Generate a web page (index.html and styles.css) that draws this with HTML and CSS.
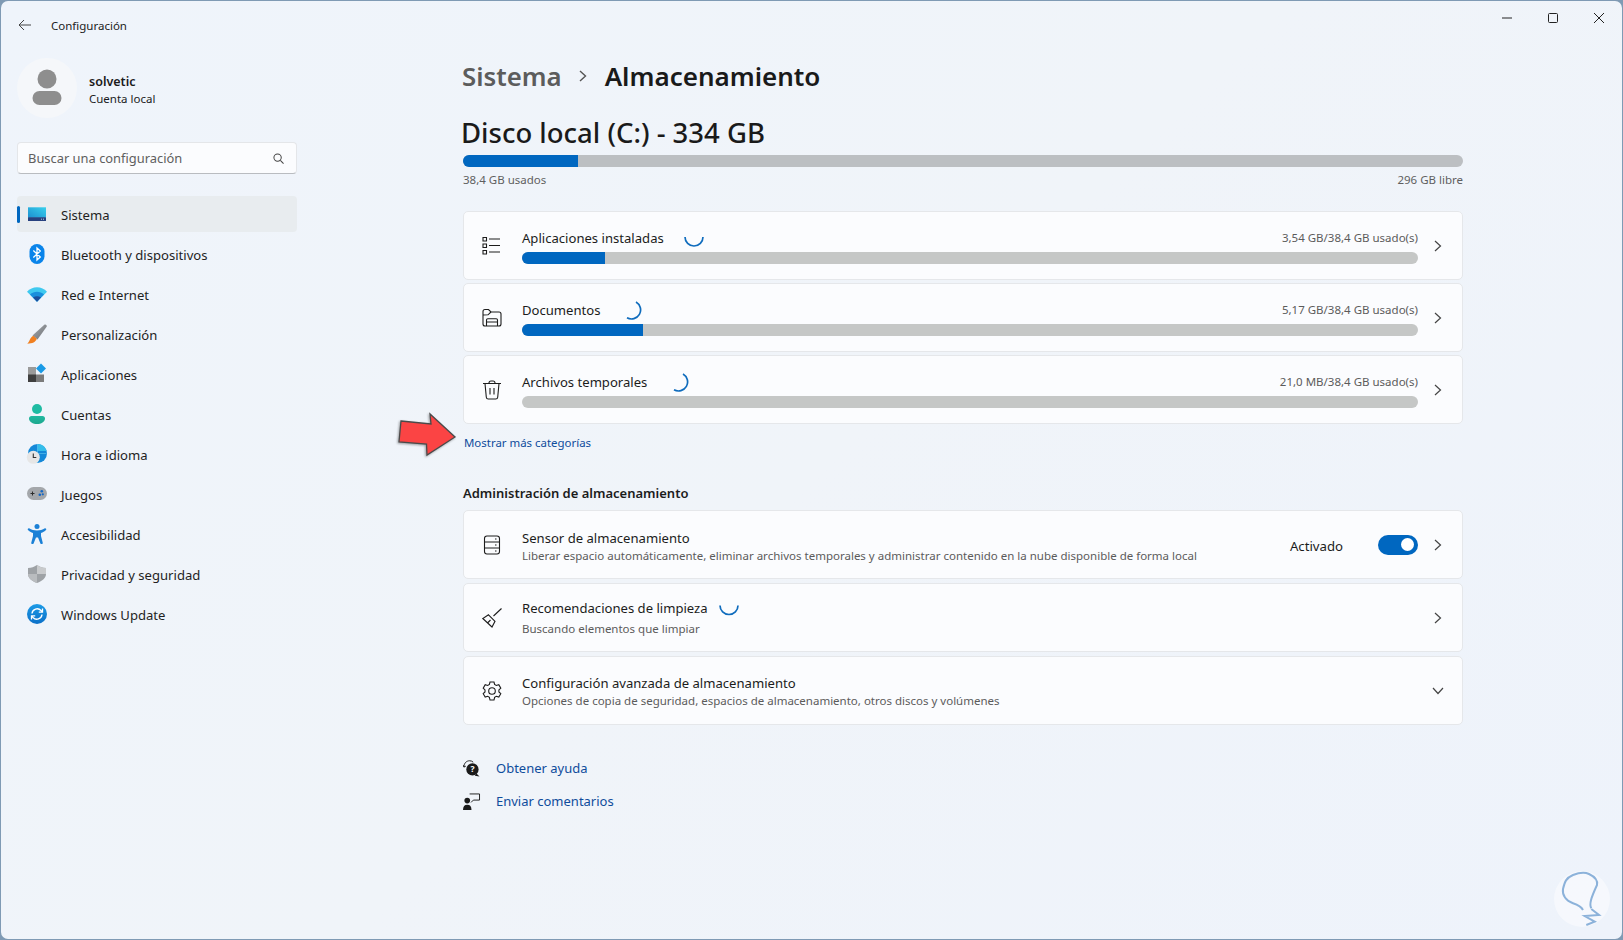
FILE: index.html
```html
<!DOCTYPE html>
<html lang="es">
<head>
<meta charset="utf-8">
<title>Configuración</title>
<link rel="stylesheet" href="styles.css">
</head>
<body>
<div class="window">
  <header class="titlebar">
    <svg class="back" viewBox="0 0 14 12"><path d="M13 6H1M6 1 1 6l5 5"/></svg>
    <span class="app-title">Configuración</span>
    <div class="controls">
      <span class="ctl"><svg viewBox="0 0 10 10"><path d="M0 5h10"/></svg></span>
      <span class="ctl"><svg viewBox="0 0 10 10"><rect x=".5" y=".5" width="9" height="9" rx="1"/></svg></span>
      <span class="ctl"><svg viewBox="0 0 10 10"><path d="M0 0l10 10M10 0 0 10"/></svg></span>
    </div>
  </header>
  <div class="body">
    <aside class="sidebar">
      <div class="profile">
        <div class="avatar"><svg viewBox="0 0 60 60"><circle cx="30" cy="21" r="9.5"/><rect x="15.500" y="33" width="29" height="14" rx="7"/></svg></div>
        <div class="who"><div class="who-name">solvetic</div><div class="who-kind">Cuenta local</div></div>
      </div>
      <div class="search"><span>Buscar una configuración</span><svg viewBox="0 0 12 12"><circle cx="5" cy="5" r="4"/><path d="m8 8 3.500 3.500"/></svg></div>
      <nav class="nav">
        <a class="nav-item active"><svg class="nav-ic" viewBox="0 0 20 20"><defs><linearGradient id="g1" x1="0" y1="1" x2="1" y2="0"><stop offset="0" stop-color="#1c8fd0"/><stop offset="1" stop-color="#38d0ec"/></linearGradient></defs><rect x="1" y="3.300" width="18" height="10.500" fill="url(#g1)"/><rect x="1" y="13.300" width="18" height="3.700" rx=".5" fill="#27417f"/><path d="M14 15.200h1M16 15.200h1" stroke="#bcd" stroke-width="1"/></svg>Sistema</a>
        <a class="nav-item"><svg class="nav-ic" viewBox="0 0 20 20"><rect x="2.500" y="0" width="15" height="20" rx="7.500" fill="#0a84ea"/><path d="M6.300 6.500 13.300 13 10 16V4l3.300 3-7 6.500" fill="none" stroke="#fff" stroke-width="1.300"/></svg>Bluetooth y dispositivos</a>
        <a class="nav-item"><svg class="nav-ic" viewBox="0 0 20 20"><path d="M0 7.800C5 1.600 15 1.600 20 7.800L10 17.800Z" fill="#3fc9ef"/><path d="M3 10.500C7 6.800 13 6.800 17 10.500L10 17.800Z" fill="#1a8fdc"/><path d="M6 13.500C8.500 11.800 11.500 11.800 14 13.500L10 17.800Z" fill="#1b4f9c"/></svg>Red e Internet</a>
        <a class="nav-item"><svg class="nav-ic" viewBox="0 0 20 20"><defs><linearGradient id="g4" x1="0" y1="0" x2="1" y2="1"><stop offset="0" stop-color="#a5a8ac"/><stop offset="1" stop-color="#6f7378"/></linearGradient></defs><path d="M17.300 .8C18.500 -.2 20.400 1.300 19.600 2.800L10.500 15.500 5.500 11.500Z" fill="url(#g4)"/><path d="M6.300 11.800 9.800 14.800C8.800 18 5.500 19.600 .2 19.800 2.600 18 2.800 13.500 6.300 11.800Z" fill="#f08021"/></svg>Personalización</a>
        <a class="nav-item"><svg class="nav-ic" viewBox="0 0 20 20"><rect x="1" y="3" width="8" height="8" fill="#9a9a9a"/><rect x="1" y="10.500" width="8" height="7.500" fill="#3f3f3f"/><rect x="9" y="10.500" width="8" height="7.500" fill="#7b7b7b"/><path d="M14 -.5 19 4.500 14 9.500 9 4.500Z" fill="#1a9ae6"/></svg>Aplicaciones</a>
        <a class="nav-item"><svg class="nav-ic" viewBox="0 0 20 20"><defs><linearGradient id="g2" x1="0" y1="0" x2="0" y2="1"><stop offset="0" stop-color="#22b8a0"/><stop offset="1" stop-color="#1ca88e"/></linearGradient></defs><circle cx="10" cy="5" r="5" fill="#1fbba3"/><path d="M2 14.500C2 13 3 12 4.500 12h11c1.500 0 2.500 1 2.500 2.500 0 3.500-4 5.500-8 5.500s-8-2-8-5.500Z" fill="url(#g2)"/></svg>Cuentas</a>
        <a class="nav-item"><svg class="nav-ic" viewBox="0 0 20 20"><circle cx="10.500" cy="9.500" r="9.500" fill="#1488d8"/><path d="M10.500 0a9.500 9.500 0 0 1 9 7h-9Z" fill="#35bdea"/><path d="M10.500 0v19M1 9.500h18.500" stroke="#64c6ee" stroke-width=".6"/><circle cx="6.300" cy="13.300" r="6.500" fill="#e6e6e6"/><path d="M6.300 9.500v4h3" fill="none" stroke="#333" stroke-width="1.100"/></svg>Hora e idioma</a>
        <a class="nav-item"><svg class="nav-ic" viewBox="0 0 20 20"><rect x="0" y="3" width="20" height="13" rx="6.500" fill="#a4a7ab"/><path d="M3.500 9.500h4M5.500 7.500v4" stroke="#2c2c2c" stroke-width="1"/><circle cx="14.800" cy="7.300" r="1.300" fill="#1366c4"/><circle cx="12.800" cy="10.800" r="1.300" fill="#1366c4"/><circle cx="15.800" cy="10.300" r="1.100" fill="#1366c4"/></svg>Juegos</a>
        <a class="nav-item"><svg class="nav-ic" viewBox="0 0 20 20"><circle cx="10" cy="2.500" r="2.500" fill="#1b80d6"/><path d="M.8 5.800C.3 5.200 1.400 3.800 2.100 4.300 4.500 6 7 6.500 10 6.500s5.500-.5 7.900-2.200c.7-.5 1.800.9 1.300 1.500-1.600 1.700-3.300 2.700-5.200 3.300V12l1.800 7c.2 1.200-2 1.600-2.400.4L11 13.500h-2l-2.400 5.900c-.4 1.200-2.600.8-2.400-.4L6 12V9.100C4.100 8.500 2.400 7.500.8 5.800Z" fill="#1b80d6"/></svg>Accesibilidad</a>
        <a class="nav-item"><svg class="nav-ic" viewBox="0 0 20 20"><path d="M10 1c3 2 5.500 2.700 9 3v6c0 4-3.500 7-9 9-5.500-2-9-5-9-9V4c3.500-.3 6-1 9-3Z" fill="#9ea2a6"/><path d="M10 1c3 2 5.500 2.700 9 3v6H10Z" fill="#c8cacc"/><path d="M1 10h9v9c-5.500-2-9-5-9-9Z" fill="#b9bcbf"/></svg>Privacidad y seguridad</a>
        <a class="nav-item"><svg class="nav-ic" viewBox="0 0 20 20"><defs><linearGradient id="g3" x1="0" y1="0" x2="0" y2="1"><stop offset="0" stop-color="#1d9be6"/><stop offset="1" stop-color="#0c70c8"/></linearGradient></defs><circle cx="10" cy="10" r="10" fill="url(#g3)"/><path d="M5 9.500a5.200 5.200 0 0 1 9-3l1 1.200M15 10.500a5.200 5.200 0 0 1-9 3l-1-1.200" fill="none" stroke="#fff" stroke-width="1.400"/><path d="M15.500 4.500v3.700h-3.700M4.500 15.500v-3.700h3.700" fill="none" stroke="#fff" stroke-width="1.300"/></svg>Windows Update</a>
      </nav>
    </aside>
    <main class="main">
      <div class="crumbs">
        <span class="crumb-parent">Sistema</span>
        <svg class="crumb-sep" viewBox="0 0 8 12"><path d="m1 1 5.500 5L1 11"/></svg>
        <span class="crumb-now">Almacenamiento</span>
      </div>
      <h1 class="disk-title">Disco local (C:) - 334 GB</h1>
      <div class="meter meter-disk"><div class="meter-fill" style="width:11.5%"></div></div>
      <div class="disk-labels"><span>38,4 GB usados</span><span>296 GB libre</span></div>

      <div class="cards cards-usage">
        <section class="card">
          <svg class="card-ic" viewBox="0 0 20 20"><path d="M1 1.500h3.500V5H1ZM1 8h3.500v3.500H1ZM1 14.500h3.500V18H1ZM7 3h11M7 9.500h11M7 16h11"/></svg>
          <div class="usage">
            <div class="usage-top"><span class="card-title">Aplicaciones instaladas</span><svg class="spin" viewBox="0 0 20 20"><path d="M1 9A9 9 0 0 0 19 9"/></svg><span class="usage-num">3,54 GB/38,4 GB usado(s)</span></div>
            <div class="meter"><div class="meter-fill" style="width:9.26%"></div></div>
          </div>
          <svg class="chev" viewBox="0 0 8 12"><path d="m1 1 5.500 5L1 11"/></svg>
        </section>
        <section class="card">
          <svg class="card-ic" viewBox="0 0 20 20"><path d="M1 16V3.500C1 2.500 1.800 1.500 3 1.500h3.500L9 4h8c1.200 0 2 .8 2 2v10c0 1.200-.8 2-2 2H3c-1.200 0-2-.8-2-2ZM1 7l5-.2L9 4M4.500 17.800V12c0-.8.500-1.300 1.300-1.300h8.400c.8 0 1.300.5 1.300 1.300v5.800M4.500 14h11"/></svg>
          <div class="usage">
            <div class="usage-top"><span class="card-title">Documentos</span><svg class="spin spin-wide" viewBox="0 0 20 20"><path d="M5 17.800A9 9 0 0 0 14 2"/></svg><span class="usage-num">5,17 GB/38,4 GB usado(s)</span></div>
            <div class="meter"><div class="meter-fill" style="width:13.5%"></div></div>
          </div>
          <svg class="chev" viewBox="0 0 8 12"><path d="m1 1 5.500 5L1 11"/></svg>
        </section>
        <section class="card">
          <svg class="card-ic" viewBox="0 0 20 20"><path d="M1 3.500h18M7 3.500V3c0-1.200 1-2 2-2h2c1 0 2 .8 2 2v.5M3 3.500l1.300 13.800c.1 1 1 1.700 2 1.700h7.400c1 0 1.900-.7 2-1.700L17 3.500M8 8v6.500M12 8v6.500"/></svg>
          <div class="usage">
            <div class="usage-top"><span class="card-title">Archivos temporales</span><svg class="spin spin-wide" viewBox="0 0 20 20"><path d="M5 17.800A9 9 0 0 0 14 2"/></svg><span class="usage-num">21,0 MB/38,4 GB usado(s)</span></div>
            <div class="meter"><div class="meter-fill meter-empty"></div></div>
          </div>
          <svg class="chev" viewBox="0 0 8 12"><path d="m1 1 5.500 5L1 11"/></svg>
        </section>
      </div>
      <a class="more-link">Mostrar más categorías</a>

      <h2 class="sec-title">Administración de almacenamiento</h2>
      <div class="cards">
        <section class="card card-tall">
          <svg class="card-ic" viewBox="0 0 20 20"><rect x="2.500" y="1" width="15" height="18" rx="2.500"/><path d="M2.500 7h15M2.500 13h15M13 4h1.500M13 10h1.500M13 16h1.500"/></svg>
          <div class="text text-low"><div class="card-title">Sensor de almacenamiento</div><div class="card-sub">Liberar espacio automáticamente, eliminar archivos temporales y administrar contenido en la nube disponible de forma local</div></div>
          <span class="state">Activado</span>
          <span class="toggle"><span class="knob"></span></span>
          <svg class="chev" viewBox="0 0 8 12"><path d="m1 1 5.500 5L1 11"/></svg>
        </section>
        <section class="card card-tall">
          <svg class="card-ic" viewBox="0 0 20 20"><path d="M19.500 .5 11.500 8M6.500 6.800 13 13.300 10 19 .8 10.500ZM5.500 15l3-3"/></svg>
          <div class="text-loose"><div class="card-head"><span class="card-title">Recomendaciones de limpieza</span><svg class="spin" viewBox="0 0 20 20"><path d="M1 7.500A9 9 0 0 0 19 7.500"/></svg></div><div class="card-sub">Buscando elementos que limpiar</div></div>
          <svg class="chev chev-end" viewBox="0 0 8 12"><path d="m1 1 5.500 5L1 11"/></svg>
        </section>
        <section class="card card-tall">
          <svg class="card-ic" viewBox="0 0 20 20"><path d="M8 1h4l.6 2.500 1.700 1 2.500-.8 2 3.400-1.900 1.800v2l1.900 1.800-2 3.400-2.500-.8-1.700 1L12 19H8l-.6-2.700-1.700-1-2.500.8-2-3.400L3 10.900v-2L1.200 7.100l2-3.400 2.500.8 1.700-1Z"/><circle cx="10" cy="10" r="3.300"/></svg>
          <div class="text"><div class="card-title">Configuración avanzada de almacenamiento</div><div class="card-sub">Opciones de copia de seguridad, espacios de almacenamiento, otros discos y volúmenes</div></div>
          <svg class="chev-down" viewBox="0 0 12 8"><path d="m1 1 5 5.500L11 1"/></svg>
        </section>
      </div>

      <div class="links">
        <a class="link-row"><svg class="link-ic" viewBox="0 0 18 18"><path class="ln" d="M1 7.500C1 3 4 .8 7 .8c1.500 0 2.800.5 3.800 1.500M1 7.500l-.5-2M1 7.500l2-1"/><circle cx="10" cy="10" r="6.500"/><path d="m14 14 3.500 3.500-5-.8Z"/><text x="10" y="13" class="qm">?</text></svg>Obtener ayuda</a>
        <a class="link-row"><svg class="link-ic" viewBox="0 0 18 18"><circle cx="4.500" cy="8" r="3"/><path d="M0 18c0-3.500 1.500-5.500 4.500-5.500S9 14.500 9 18Z"/><path class="ln" d="M7 1h10.500v6.500H11L8.500 10"/></svg>Enviar comentarios</a>
      </div>
    </main>
  </div>
  <svg class="red-arrow" viewBox="0 0 62 46"><path d="M4 9 34 12 33 2 58 25 30 43 29.500 32 2 30Z"/></svg>
  <div class="stamp"><svg viewBox="0 0 60 60"><path d="M39.300 39.300C37 35 39 29 45 16 46 11 42.700 7.700 37 5 33 3 27.700 3.300 21 6 14 9 12.700 12.700 11 20c-1 6 3 12 10 14.300 4 1.400 8 3 10 6.700M39.300 40 47 46 32.700 47 42.700 52.700 34.300 56"/></svg></div>
</div>
</body>
</html>
```
FILE: styles.css
```css
* { box-sizing: border-box; }
html, body { margin: 0; height: 100%; overflow: hidden; background: #7f9ab4; }
body { font-family: "Noto Sans", "Open Sans", sans-serif; font-size: 13px; color: #1b1b1b; }

.window {
  position: relative;
  width: 1621px; height: 938px;
  margin: 1px 0 0 1px;
  background: linear-gradient(135deg, #eff4fb 0%, #f0f4f9 50%, #eef3fb 100%);
  border-radius: 7px;
  overflow: hidden;
}

.titlebar { display: flex; align-items: center; height: 48px; padding-left: 17px; }
.back { width: 14px; height: 12px; fill: none; stroke: #444; stroke-width: 1; }
.app-title { margin-left: 19px; font-size: 11.500px; color: #222; }
.controls { display: flex; margin-left: auto; }
.ctl { display: flex; justify-content: center; align-items: center; width: 46px; height: 32px; margin-top: -15px; }
.ctl svg { width: 10px; height: 10px; fill: none; stroke: #222; stroke-width: 1; }

.body { display: flex; }
.sidebar { flex: 0 0 462px; padding: 9px 0 0 16px; }

.profile { display: flex; align-items: center; gap: 12px; height: 60px; }
.avatar { width: 60px; height: 60px; border-radius: 50%; background: #f5f7fa; }
.avatar svg { width: 60px; height: 60px; fill: #8e8e8e; display: block; }
.who { padding-top: 2px; }
.who-name { font-size: 12.500px; font-weight: 600; line-height: 17px; margin-top: 1px; }
.who-kind { font-size: 11.500px; line-height: 17px; }

.search {
  display: flex; align-items: center; justify-content: space-between;
  width: 280px; height: 32px; margin-top: 24px; padding: 0 12px 0 10px;
  background: #fbfcfe; border: 1px solid #e4e6e9; border-bottom-color: #b9bcc0; border-radius: 4px;
  font-size: 12.900px; color: #5f5f5f;
}
.search svg { width: 11px; height: 11px; fill: none; stroke: #444; stroke-width: 1.100; }

.nav { display: flex; flex-direction: column; gap: 4px; width: 280px; margin-top: 22px; }
.nav-item { position: relative; display: flex; align-items: center; gap: 14px; height: 36px; padding: 2px 0 0 10px; border-radius: 4px; font-size: 13.100px; color: #1f1f1f; }
.nav-item.active { background: #e8ecef; }
.nav-item.active::before { content: ""; position: absolute; left: 0; top: 10px; width: 3px; height: 17px; border-radius: 2px; background: #0067c0; }
.nav-ic { width: 20px; height: 20px; flex: none; margin-top: -2px; overflow: visible; }

.main { flex: 0 0 1000px; padding-top: 7px; }
.crumbs { display: flex; align-items: center; height: 40px; margin-left: -1px; font-size: 25.800px; font-weight: 600; }
.crumb-parent { color: #5c5c5c; }
.crumb-sep { width: 8px; height: 12px; margin: 0 18px 0 17px; fill: none; stroke: #555; stroke-width: 1.400; }
.crumb-now { color: #1a1a1a; font-size: 26px; }

.disk-title { height: 36px; margin: 19px 0 0 -2px; font-size: 27.500px; font-weight: 500; line-height: 36px; color: #1a1a1a; }
.meter { height: 12px; border-radius: 6px; background: #c5c7c6; overflow: hidden; }
.meter-disk { margin-top: 4px; background: #bcbfc2; }
.meter-fill { height: 100%; background: #0067c0; }
.meter-empty { width: 0; }
.disk-labels { display: flex; justify-content: space-between; height: 16px; margin-top: 5px; font-size: 11.500px; line-height: 16px; color: #5f5f5f; }

.cards { display: flex; flex-direction: column; gap: 4px; }
.cards-usage { gap: 3.500px; margin-top: 23px; }
.card { display: flex; align-items: center; height: 68.500px; padding: 0 20px 0 18px; background: #fbfcfe; border: 1px solid #e5e7ea; border-radius: 5px; }
.cards-usage .card { padding-top: 2px; }
.card-tall { height: 69px; }
.card-ic { flex: none; width: 20px; height: 20px; margin-right: 20px; fill: none; stroke: #1c1c1c; stroke-width: 1.100; overflow: visible; }
.usage { flex: 1; min-width: 0; }
.usage-top { display: flex; align-items: center; height: 20px; margin-bottom: 4px; }
.card-title { font-size: 13.100px; line-height: 18px; color: #1c1c1c; }
.usage-num { margin-left: auto; font-size: 11.500px; color: #5b5b5b; position: relative; top: -1px; }
.spin { flex: none; width: 20px; height: 20px; margin-left: 20px; fill: none; stroke: #0f6cbd; stroke-width: 1.700; }
.spin-wide { margin-left: 21.500px; }
.chev { flex: none; width: 8px; height: 12px; margin-left: 16px; fill: none; stroke: #444; stroke-width: 1.200; }
.chev-end { margin-left: auto; }
.chev-down { flex: none; width: 12px; height: 8px; margin: 0 -2px 0 14px; fill: none; stroke: #444; stroke-width: 1.200; }

.more-link { display: block; height: 16px; margin: 11.500px 0 0 1px; font-size: 11.450px; line-height: 16px; color: #0f4c9c; }
.sec-title { height: 20px; margin: 32px 0 7px; font-size: 13px; font-weight: 600; line-height: 20px; color: #1c1c1c; }

.text { flex: 1; min-width: 0; padding-top: 2px; }
.text-low { padding-top: 4px; }
.text .card-title { line-height: 19px; }
.card-sub { font-size: 11.500px; line-height: 16px; color: #5b5b5b; }
.card-head { display: flex; align-items: center; height: 20px; margin-bottom: 3px; }
.card-head .spin { margin-left: 11px; }
.state { padding-top: 2px; font-size: 13.200px; color: #1c1c1c; }
.toggle { display: flex; align-items: center; justify-content: flex-end; flex: none; width: 40px; height: 20px; margin-left: 35px; padding-right: 4px; border-radius: 10px; background: #0067c0; }
.knob { width: 13px; height: 13px; border-radius: 50%; background: #fff; }

.links { display: flex; flex-direction: column; gap: 13px; margin-top: 33px; }
.link-row { display: flex; align-items: center; gap: 16px; height: 20px; font-size: 13px; color: #0f4c9c; }
.link-ic { flex: none; width: 17px; height: 17px; fill: #1a1a1a; overflow: visible; }
.link-ic .ln { fill: none; stroke: #1a1a1a; stroke-width: 1; }
.link-ic .qm { fill: #fff; font-size: 9px; font-weight: 700; text-anchor: middle; }

.red-arrow { position: absolute; left: 396px; top: 411px; width: 62px; height: 46px; fill: #fb4444; stroke: #4a4a4a; stroke-width: 1.300; stroke-linejoin: miter; filter: drop-shadow(-1px 1px 1px rgba(0,0,0,.35)); }
.stamp { position: absolute; left: 1553px; top: 870px; width: 56px; height: 56px; border-radius: 50%; background: rgba(255,255,255,.45); }
.stamp svg { display: block; width: 60px; height: 60px; margin: -2px; fill: none; stroke: #8cb2da; stroke-width: 2; }
```
